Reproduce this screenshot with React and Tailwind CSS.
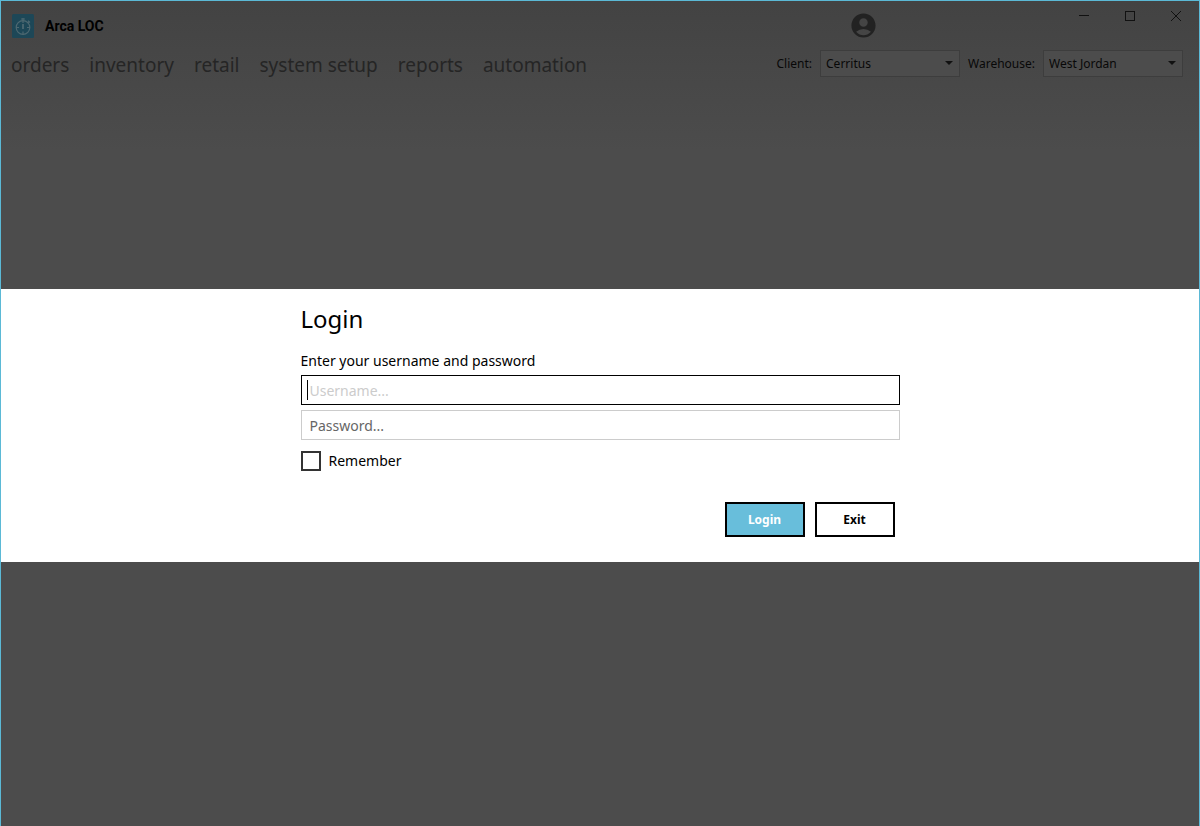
import { MdAccountCircle } from 'react-icons/md';

const NAV_ITEMS = ['orders', 'inventory', 'retail', 'system setup', 'reports', 'automation'];

function AppLogo() {
  return (
    <svg viewBox="0 0 24 24" className="h-6 w-6" aria-hidden="true">
      <rect x="1" width="22" height="24" rx="1.5" fill="#1d4757" />
      <g fill="none" stroke="#4d6871" strokeWidth="1.2">
        <circle cx="12" cy="13.5" r="6.8" />
        <path d="M12 4v5M10 5h4M16.5 9l1.5-1.5M17 6.8l2 1.7M5 13.5h3M16 13.5h3M12 17.5v3" />
        <path d="M12 10v5" strokeWidth="1.8" />
      </g>
    </svg>
  );
}

function WindowControls() {
  const button = 'flex h-[30px] w-[46px] items-center justify-center';

  return (
    <div className="flex text-[#111111]">
      <button type="button" aria-label="Minimize" className={button}>
        <svg viewBox="0 0 10 10" className="h-2.5 w-2.5" shapeRendering="crispEdges">
          <path d="M0 4.5h10" stroke="currentColor" />
        </svg>
      </button>
      <button type="button" aria-label="Maximize" className={button}>
        <svg viewBox="0 0 10 10" className="h-2.5 w-2.5" shapeRendering="crispEdges">
          <path d="M.5 .5h9v9h-9z" fill="none" stroke="currentColor" />
        </svg>
      </button>
      <button type="button" aria-label="Close" className={button}>
        <svg viewBox="0 0 10 10" className="h-2.5 w-2.5">
          <path d="M0 0l10 10M10 0L0 10" stroke="currentColor" />
        </svg>
      </button>
    </div>
  );
}

function HeaderSelect({ id, label, value }) {
  return (
    <div className="flex items-center gap-2">
      <label htmlFor={id}>{label}</label>
      <div className="relative">
        <select
          id={id}
          defaultValue={value}
          className="block h-[27px] w-[140px] appearance-none border border-[#3d3d3d] bg-[#4c4c4c] px-[5px]"
        >
          <option>{value}</option>
        </select>
        <svg viewBox="0 0 8 4" className="pointer-events-none absolute top-[11px] right-[7px] h-1 w-2" aria-hidden="true">
          <path d="M0 0h8L4 4z" fill="#111111" />
        </svg>
      </div>
    </div>
  );
}

function Header() {
  return (
    <header>
      <div className="flex h-[49px] items-start justify-between">
        <div className="flex flex-1 items-center gap-2.5 pt-3 pl-2.5">
          <AppLogo />
          <h1 className="font-['Roboto',sans-serif] text-[14px] leading-[26px] font-bold text-black">Arca LOC</h1>
        </div>
        <button type="button" aria-label="Account" className="mt-2.5 mr-[183px]">
          <MdAccountCircle className="h-[29px] w-[29px] text-[#222222]" />
        </button>
        <WindowControls />
      </div>

      <div className="flex items-start justify-between pr-4 pl-2.5">
        <nav className="flex gap-5 text-[19px] leading-[30px] text-[#252525]">
          {NAV_ITEMS.map((item) => (
            <a key={item} href={`#${item.replace(' ', '-')}`}>
              {item}
            </a>
          ))}
        </nav>
        <div className="flex items-center gap-2 text-[12px] text-[#080808]">
          <HeaderSelect id="client" label="Client:" value="Cerritus" />
          <HeaderSelect id="warehouse" label="Warehouse:" value="West Jordan" />
        </div>
      </div>
    </header>
  );
}

function LoginDialog() {
  const field = 'block h-[30px] w-full border bg-white px-2 text-[14px] outline-none';
  const button = 'h-[35px] w-20 border-2 border-black text-[12px] font-bold';

  return (
    <section role="dialog" aria-labelledby="login-title" className="bg-white text-black">
      <form className="mx-auto w-1/2 pt-3 pb-[25px]" onSubmit={(e) => e.preventDefault()}>
        <h2 id="login-title" className="text-[24px] leading-9">
          Login
        </h2>
        <p className="mt-3 text-[14px] leading-6">Enter your username and password</p>

        <div className="relative mt-0.5">
          <input
            type="text"
            aria-label="Username"
            placeholder="Username..."
            className={`${field} border-black placeholder:text-[#cccccc]`}
          />
          <span className="absolute top-[5px] left-1.5 h-5 w-px bg-black" />
        </div>
        <input
          type="password"
          aria-label="Password"
          placeholder="Password..."
          className={`${field} mt-[5px] border-[#cccccc] placeholder:text-[#666666]`}
        />

        <div className="mt-[11px] flex items-center gap-2 text-[14px] leading-5">
          <input id="remember" type="checkbox" className="h-5 w-5 appearance-none border-2 border-[#333333] bg-white" />
          <label htmlFor="remember">Remember</label>
        </div>

        <div className="mt-[31px] flex justify-end gap-2.5 pr-[5px]">
          <button type="submit" className={`${button} bg-[#68bedb] text-white`}>
            Login
          </button>
          <button type="button" className={`${button} bg-white`}>
            Exit
          </button>
        </div>
      </form>
    </section>
  );
}

function App() {
  return (
    <div className="min-h-screen border-x border-t border-[#5bb9d6] bg-[#4c4c4c] bg-[linear-gradient(#434343,#4c4c4c_150px)] font-['Noto_Sans',sans-serif]">
      <Header />
      <main className="pt-[209px]">
        <LoginDialog />
      </main>
    </div>
  );
}

export default App;
